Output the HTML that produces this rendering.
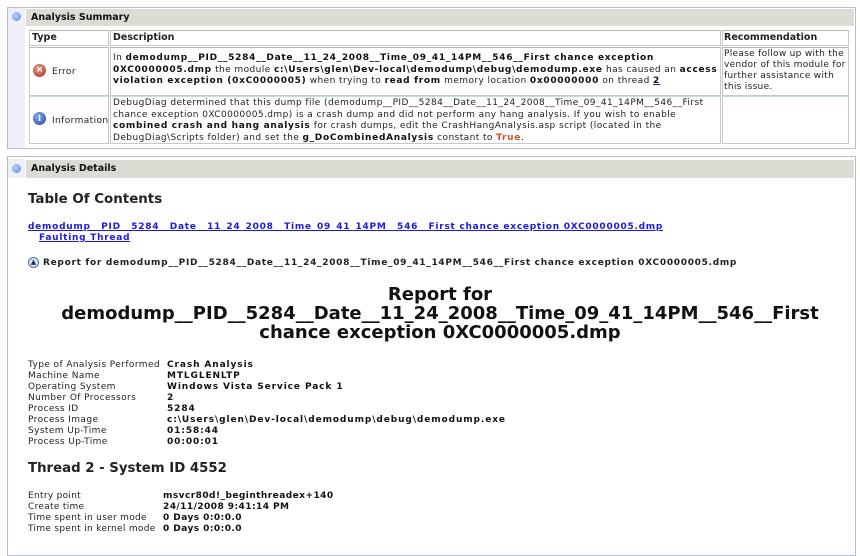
<!DOCTYPE html>
<html><head><meta charset="utf-8"><style>
*{margin:0;padding:0;box-sizing:border-box}
body{width:860px;height:551px;background:#fff;font-family:"DejaVu Sans",Verdana,sans-serif;font-size:9px;color:#222;position:relative;overflow:hidden}
.a{position:absolute;white-space:nowrap}
.box{position:absolute;border:1px solid #b4bcd8;background:#fff}
.hdr{position:absolute;background:#dcdcd4;font-weight:bold;font-size:9.5px;color:#111;padding-left:5px;line-height:17px}
.ico{position:absolute;background:#eef0f6}
.dot{position:absolute;width:9px;height:9px;border-radius:50%;background:radial-gradient(circle at 35% 35%,#b8d0f8,#5a88d8)}
.cell{position:absolute;border:1px solid #c8c8c8;border-top-color:#b8b8b8}
b{color:#111}
a{color:#1a1ae0}
.lbl{line-height:11px}
.desc{letter-spacing:0.42px}
.desc b{letter-spacing:0.7px}
</style></head><body>

<div class="box" style="left:7px;top:7px;width:849px;height:142px"></div>
<div class="ico" style="left:8px;top:8px;width:17px;height:140px"></div>
<div class="dot" style="left:12px;top:12px"></div>
<div class="hdr" style="left:26px;top:9px;width:828px;height:17px">Analysis Summary</div>

<div class="cell" style="left:29px;top:30px;width:80px;height:16px"></div>
<div class="cell" style="left:110px;top:30px;width:611px;height:16px"></div>
<div class="cell" style="left:722px;top:30px;width:127px;height:16px"></div>
<div class="a" style="left:32px;top:32px;font-weight:bold;font-size:9.5px">Type</div>
<div class="a" style="left:113px;top:32px;font-weight:bold;font-size:9.5px">Description</div>
<div class="a" style="left:724px;top:32px;font-weight:bold;font-size:9.5px">Recommendation</div>

<div class="cell" style="left:29px;top:47px;width:80px;height:49px"></div>
<div class="cell" style="left:110px;top:47px;width:611px;height:49px"></div>
<div class="cell" style="left:722px;top:47px;width:127px;height:49px"></div>
<div class="a" style="left:33px;top:64px;width:13px;height:13px;border-radius:50%;background:radial-gradient(circle at 40% 35%,#e89a88,#a03020);color:#fff;font-size:9px;font-weight:bold;text-align:center;line-height:13px">×</div>
<div class="a" style="left:52px;top:67px;letter-spacing:0.4px">Error</div>
<div class="a lbl desc" style="left:113px;top:53px;line-height:11.5px">In <b>demodump__PID__5284__Date__11_24_2008__Time_09_41_14PM__546__First chance exception</b><br><b>0XC0000005.dmp</b> the module <b>c:\Users\glen\Dev-local\demodump\debug\demodump.exe</b> has caused an <b>access</b><br><b>violation exception (0xC0000005)</b> when trying to <b>read from</b> memory location <b>0x00000000</b> on thread <a href="#"><b>2</b></a></div>
<div class="a lbl" style="left:724px;top:49px;line-height:11px;letter-spacing:0.3px">Please follow up with the<br>vendor of this module for<br>further assistance with<br>this issue.</div>

<div class="cell" style="left:29px;top:96px;width:80px;height:48px;border-top-color:#c8e0c8"></div>
<div class="cell" style="left:110px;top:96px;width:611px;height:48px;border-top-color:#c8e0c8"></div>
<div class="cell" style="left:722px;top:96px;width:127px;height:48px;border-top-color:#c8e0c8"></div>
<div class="a" style="left:33px;top:112px;width:13px;height:13px;border-radius:50%;background:radial-gradient(circle at 40% 35%,#8ab0f0,#1a40a0);color:#fff;font-size:9px;font-weight:bold;text-align:center;line-height:13px;font-family:'Liberation Serif',serif">i</div>
<div class="a" style="left:52px;top:116px;letter-spacing:0.4px">Information</div>
<div class="a lbl desc" style="left:113px;top:98px;line-height:11.5px">DebugDiag determined that this dump file (demodump__PID__5284__Date__11_24_2008__Time_09_41_14PM__546__First<br>chance exception 0XC0000005.dmp) is a crash dump and did not perform any hang analysis. If you wish to enable<br><b>combined crash and hang analysis</b> for crash dumps, edit the CrashHangAnalysis.asp script (located in the<br>DebugDiag\Scripts folder) and set the <b>g_DoCombinedAnalysis</b> constant to <b style="color:#d05030">True</b>.</div>

<div class="box" style="left:7px;top:156px;width:849px;height:400px"></div>
<div class="ico" style="left:8px;top:159px;width:17px;height:19px"></div>
<div class="dot" style="left:12px;top:164px"></div>
<div class="hdr" style="left:26px;top:160px;width:828px;height:18px">Analysis Details</div>

<div class="a" style="left:28px;top:192px;font-size:13.4px;font-weight:bold">Table Of Contents</div>
<div class="a" style="left:28px;top:222px;font-weight:bold;color:#1a1ae0;text-decoration:underline;letter-spacing:0.74px">demodump__PID__5284__Date__11_24_2008__Time_09_41_14PM__546__First chance exception 0XC0000005.dmp</div>
<div class="a" style="left:39px;top:233px;font-weight:bold;color:#1a1ae0;text-decoration:underline;letter-spacing:0.74px">Faulting Thread</div>
<div class="a" style="left:28px;top:257px;width:11px;height:11px;border-radius:50%;border:1px solid #5070a0;background:#dbe6f6;font-size:7px;line-height:9px;text-align:center;color:#203060">▲</div>
<div class="a" style="left:43px;top:258px;font-weight:bold;letter-spacing:0.7px">Report for demodump__PID__5284__Date__11_24_2008__Time_09_41_14PM__546__First chance exception 0XC0000005.dmp</div>

<div class="a" style="left:0;width:880px;top:285px;text-align:center;font-size:18px;font-weight:bold;line-height:19px;color:#111">Report for<br>demodump__PID__5284__Date__11_24_2008__Time_09_41_14PM__546__First<br>chance exception 0XC0000005.dmp</div>

<div class="a lbl" style="left:28px;top:360px;letter-spacing:0.4px">Type of Analysis Performed<br>Machine Name<br>Operating System<br>Number Of Processors<br>Process ID<br>Process Image<br>System Up-Time<br>Process Up-Time</div>
<div class="a lbl" style="left:167px;top:360px;font-weight:bold;color:#111;letter-spacing:0.9px">Crash Analysis<br>MTLGLENLTP<br>Windows Vista Service Pack 1<br>2<br>5284<br>c:\Users\glen\Dev-local\demodump\debug\demodump.exe<br>01:58:44<br>00:00:01</div>

<div class="a" style="left:28px;top:461px;font-size:13.3px;font-weight:bold">Thread 2 - System ID 4552</div>
<div class="a lbl" style="left:28px;top:491px;letter-spacing:0.3px">Entry point<br>Create time<br>Time spent in user mode<br>Time spent in kernel mode</div>
<div class="a lbl" style="left:163px;top:491px;font-weight:bold;color:#111;letter-spacing:0.45px">msvcr80d!_beginthreadex+140<br>24/11/2008 9:41:14 PM<br>0 Days 0:0:0.0<br>0 Days 0:0:0.0</div>
</body></html>
